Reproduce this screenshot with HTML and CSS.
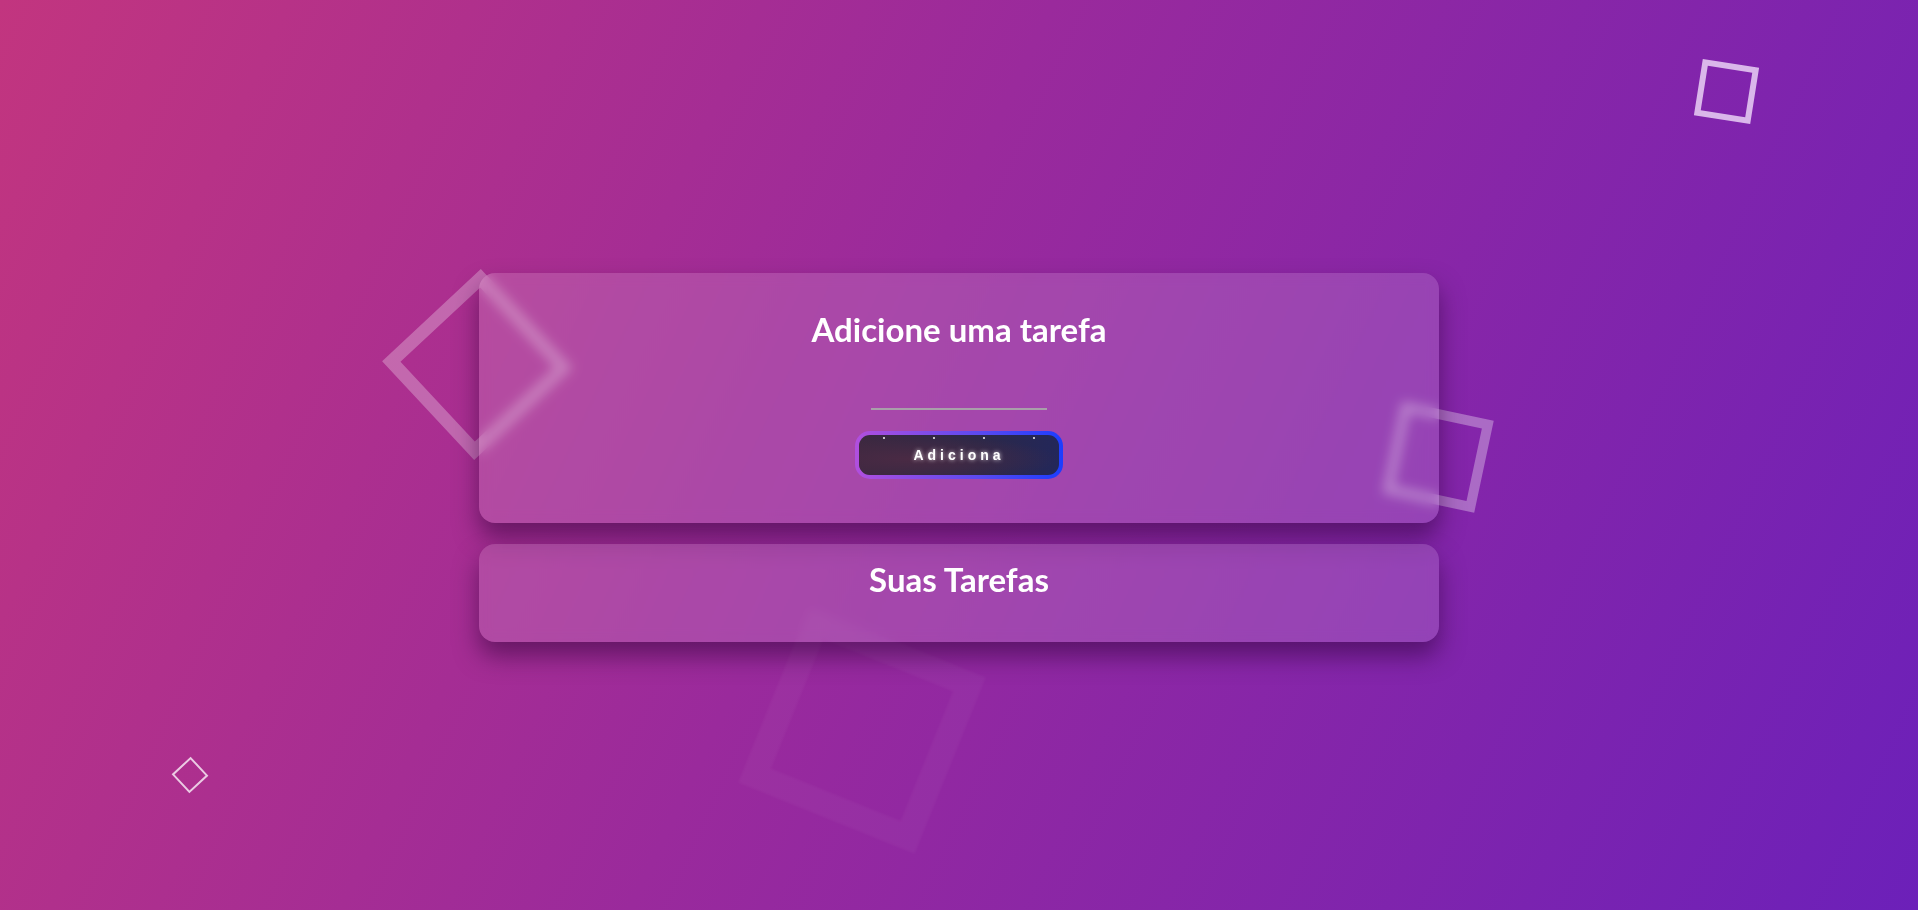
FILE: index.html
```html
<!DOCTYPE html>
<html lang="pt-BR">
<head>
    <meta charset="UTF-8">
    <title>Lista de Tarefas</title>
    <link rel="stylesheet" href="styles.css">
</head>
<body>
    <div class="shapes">
        <span class="shape shape-1"></span>
        <span class="shape shape-2"></span>
        <span class="shape shape-3"></span>
        <span class="shape shape-4"></span>
        <span class="shape shape-5"></span>
    </div>

    <main class="container">
        <section class="card add-card">
            <h2>Adicione uma tarefa</h2>
            <input type="text" id="task-input" class="task-input">
            <button id="add-btn" class="add-btn">Adiciona</button>
        </section>

        <section class="card list-card">
            <h2>Suas Tarefas</h2>
            <ul id="task-list" class="task-list"></ul>
        </section>
    </main>
</body>
</html>
```

FILE: styles.css
```css
body {
    margin: 0;
    padding: 4px 0 0;
    box-sizing: border-box;
    min-height: 100vh;
    font-family: Lato, "Noto Sans", sans-serif;
    background: linear-gradient(115deg, #c2357f 0%, #9a2a9c 45%, #6c20b9 100%);
    display: flex;
    align-items: center;
    justify-content: center;
    overflow: hidden;
}
.shapes {
    position: fixed;
    inset: 0;
    pointer-events: none;
}
.shape {
    position: absolute;
    box-sizing: border-box;
}
.shape-1 {
    left: 1698px;
    top: 63px;
    width: 57px;
    height: 57px;
    border: 6px solid rgba(240, 220, 250, 0.8);
    transform: rotate(9deg);
}
.shape-2 {
    left: 410px;
    top: 297px;
    width: 135px;
    height: 135px;
    border: 13px solid rgba(255, 255, 255, 0.28);
    transform: rotate(47deg);
}
.shape-3 {
    left: 1391px;
    top: 410px;
    width: 94px;
    height: 94px;
    border: 10px solid rgba(255, 255, 255, 0.32);
    transform: rotate(12deg);
}
.shape-4 {
    left: 767px;
    top: 635px;
    width: 190px;
    height: 190px;
    border: 25px solid rgba(255, 255, 255, 0.035);
    filter: blur(1px);
    transform: rotate(22deg);
}
.shape-5 {
    left: 177px;
    top: 762px;
    width: 26px;
    height: 26px;
    border: 2px solid rgba(255, 255, 255, 0.75);
    transform: rotate(47deg);
}
.container {
    width: 960px;
    display: flex;
    flex-direction: column;
    gap: 21px;
    position: relative;
}
.card {
    background: rgba(255, 255, 255, 0.14);
    backdrop-filter: blur(6px);
    border-radius: 16px;
    box-shadow: 0 14px 24px rgba(40, 0, 50, 0.5);
    display: flex;
    flex-direction: column;
    align-items: center;
    color: #fff;
}
.card h2 {
    margin: 0;
    font-size: 33px;
    line-height: 38px;
    font-weight: 700;
}
.add-card {
    padding: 37px 20px 44px;
}
.list-card {
    padding: 16px 20px 44px;
}
.task-input {
    margin-top: 30px;
    width: 176px;
    height: 32px;
    box-sizing: border-box;
    background: transparent;
    border: none;
    border-bottom: 2px solid rgba(170, 170, 170, 0.9);
    color: #fff;
    outline: none;
}
.add-btn {
    margin-top: 21px;
    width: 208px;
    height: 48px;
    border: 4px solid transparent;
    border-radius: 15px;
    background:
        radial-gradient(circle at 12px 3px, rgba(255, 255, 255, 0.7) 0.8px, transparent 1.3px) 13px 0 / 50px 8px repeat-x padding-box,
        radial-gradient(ellipse at 25% 60%, #4a2a44 0%, transparent 70%) padding-box,
        linear-gradient(90deg, #3a283f, #2c2848 60%, #23275a) padding-box,
        linear-gradient(90deg, #b14fde, #5a4af0 60%, #1c3dff) border-box;
    color: #fff;
    font-family: "Liberation Sans", Arial, sans-serif;
    font-weight: 700;
    font-size: 14px;
    letter-spacing: 4px;
    text-shadow: 0 0 4px rgba(255, 255, 255, 0.85);
    cursor: pointer;
}
.task-list {
    margin: 0;
    padding: 0;
    list-style: none;
}
```
